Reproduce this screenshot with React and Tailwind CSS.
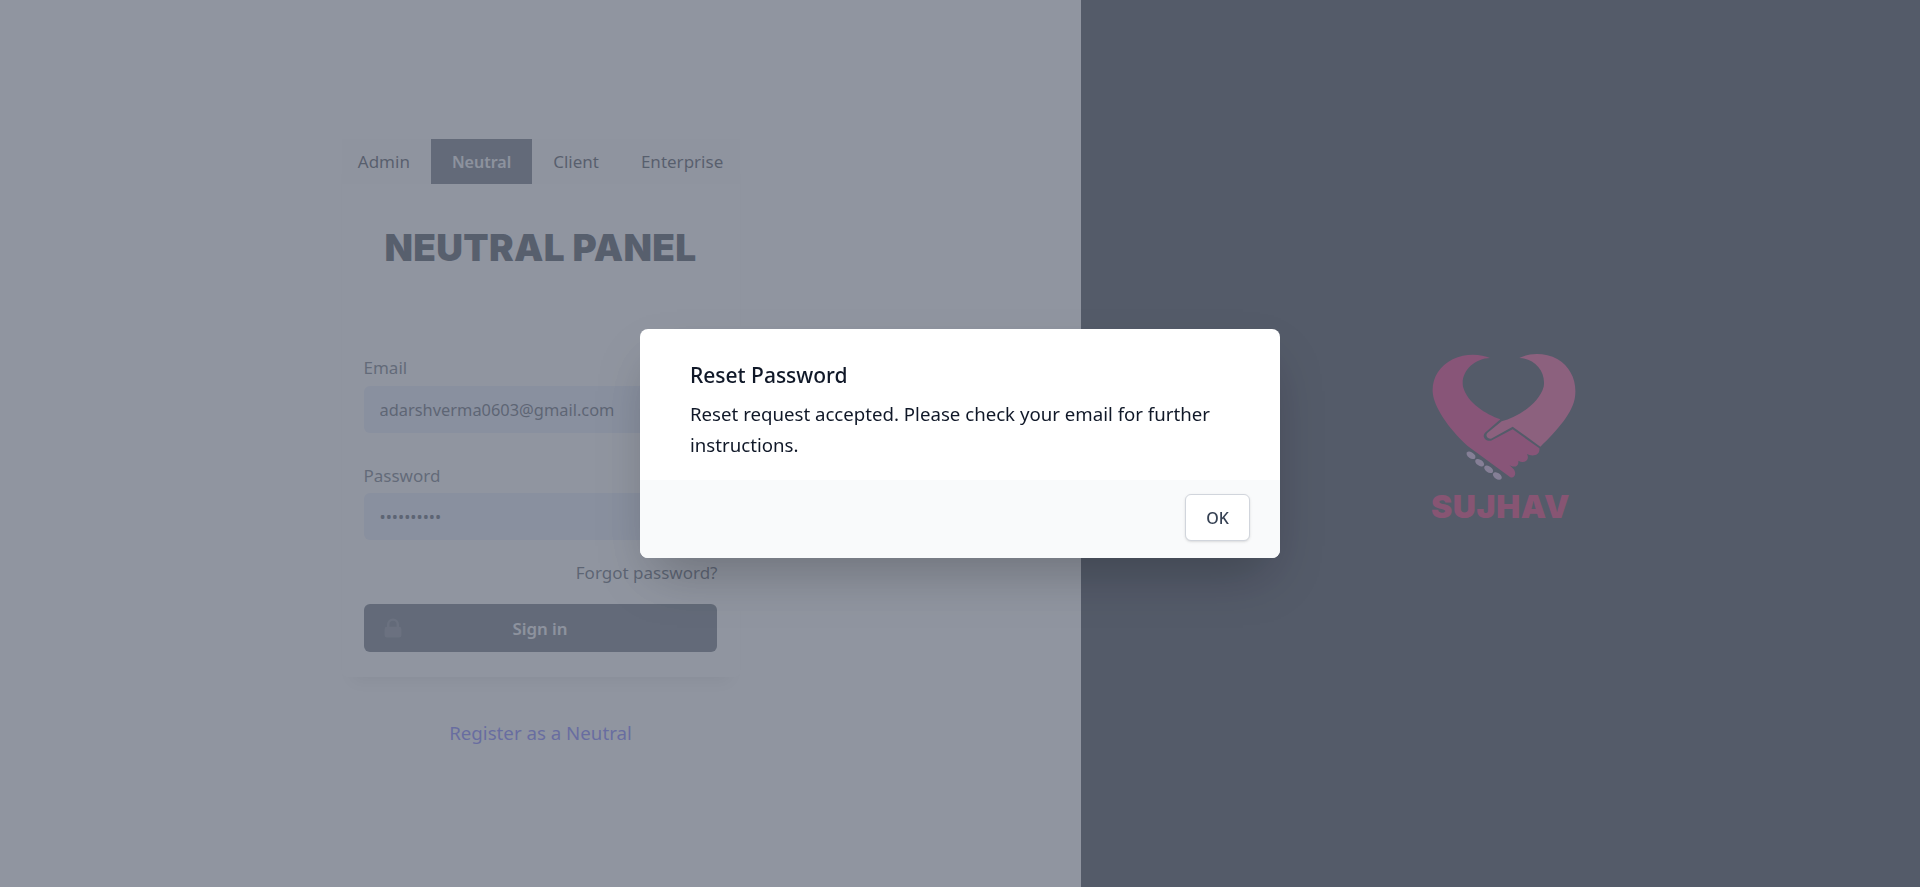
import { useState } from 'react';

const tabs = ['Admin', 'Neutral', 'Client', 'Enterprise'];

const Logo = () => (
  <div className="flex flex-col items-center mb-[25px]">
    <svg width="180" height="150" viewBox="0 0 540 450">
      <path
        d="M237 54C210 42 165 38 125 58C85 78 63 115 65 155C68 200 110 262 170 318L298 412C310 416 318 402 308 388L292 372C305 385 325 382 322 362C338 372 358 362 348 342C362 350 388 348 385 325L305 268L240 302C222 305 212 288 222 278L268 238C225 222 170 190 156 140C148 95 190 55 237 54Z"
        fill="#e00060"
      />
      <path
        d="M325 54C350 40 400 35 440 58C480 82 498 125 492 170C487 215 440 270 388 320L305 260L240 296C228 296 222 286 230 278L272 244C320 232 385 190 398 140C406 95 370 55 325 54Z"
        fill="#f03078"
      />
      <ellipse cx="180" cy="346" rx="15" ry="9" transform="rotate(35 180 346)" fill="#d4a8d8" />
      <ellipse cx="206" cy="368" rx="15" ry="9" transform="rotate(35 206 368)" fill="#d4a8d8" />
      <ellipse cx="233" cy="388" rx="15" ry="9" transform="rotate(35 233 388)" fill="#d4a8d8" />
      <ellipse cx="259" cy="408" rx="15" ry="9" transform="rotate(35 259 408)" fill="#d4a8d8" />
    </svg>
    <div className="mt-[2px] font-['Inter',sans-serif] font-black text-[32px] leading-[30px] tracking-[0.6px] text-[#dc004c]">SUJHAV</div>
  </div>
);

export default function App() {
  const [tab, setTab] = useState('Neutral');
  const [email, setEmail] = useState('adarshverma0603@gmail.com');
  const [password, setPassword] = useState('1234567890');

  return (
    <div className="flex h-screen font-['Noto_Sans',sans-serif] overflow-hidden">
      <div className="w-[1081px] bg-white flex flex-col items-center pt-[139px]">
        <div className="w-[398px] shadow-[0_14px_16px_-10px_rgba(0,0,0,0.12)] rounded-md pb-[25px]">
          <div className="flex items-center justify-center h-[45px] bg-[#fbfbfb]">
            {tabs.map((t) => (
              <button
                key={t}
                onClick={() => setTab(t)}
                className={`h-[45px] px-[21px] shrink-0 ${
                  t === tab ? 'bg-[#4b5563] text-gray-100 text-[16px] font-semibold' : 'text-[17px] text-[#1f2937]'
                }`}
              >
                {t}
              </button>
            ))}
          </div>

          <h1 className="mt-[40px] text-center font-['Inter',sans-serif] font-black text-[37px] leading-[48px] tracking-[0.3px] text-[#1f2937]">
            NEUTRAL PANEL
          </h1>

          <form className="mt-[84px] px-[22px]">
            <label className="block text-[17px] leading-[24px] text-[#4b5563] mb-[6px]">Email</label>
            <input
              value={email}
              onChange={(e) => setEmail(e.target.value)}
              className="block w-full h-[47px] px-4 rounded-md bg-[#e2e9fb] text-[16.4px] text-[#374151]"
            />
            <label className="block mt-[31px] text-[17px] leading-[24px] text-[#4b5563] mb-[5px]">Password</label>
            <input
              type="password"
              value={password}
              onChange={(e) => setPassword(e.target.value)}
              className="block w-full h-[47px] px-4 rounded-md bg-[#e2e9fb] text-[16.4px] text-[#374151]"
            />
            <div className="mt-[21px] text-right text-[17px] leading-[24px] text-[#374151]">Forgot password?</div>
            <button type="button" className="relative mt-[19px] w-[353px] h-[48px] pt-[2px] rounded-md bg-[#4b5563] text-gray-100 text-[16.8px] font-semibold">
              <svg viewBox="0 0 20 20" fill="currentColor" className="absolute left-[17px] top-[12px] w-6 h-6 text-[#6b7280]">
                <path fillRule="evenodd" clipRule="evenodd" d="M5 9V7a5 5 0 0110 0v2a2 2 0 012 2v5a2 2 0 01-2 2H5a2 2 0 01-2-2v-5a2 2 0 012-2zm8-2v2H7V7a3 3 0 016 0z" />
              </svg>
              Sign in
            </button>
          </form>
        </div>
        <a className="mt-[44px] text-[18.7px] leading-[24px] text-indigo-500">Register as a Neutral</a>
      </div>

      <div className="flex-1 bg-[#111827] flex items-center justify-center">
        <Logo />
      </div>

      <div className="fixed inset-0 bg-[#6b7280]/75 flex items-center justify-center">
        <div className="w-[640px] rounded-lg bg-white shadow-2xl overflow-hidden">
          <div className="pt-[32px] px-[50px] h-[151px]">
            <h3 className="text-[21px] leading-[28px] font-medium text-gray-900">Reset Password</h3>
            <p className="mt-[9px] text-[18.65px] leading-[31px] text-gray-900">
              Reset request accepted. Please check your email for further instructions.
            </p>
          </div>
          <div className="h-[78px] bg-gray-50 flex items-start justify-end pt-[14px] pr-[30px]">
            <button className="w-[65px] h-[47px] rounded-md border border-gray-300 bg-white text-[16px] font-medium text-gray-700 shadow-sm">
              OK
            </button>
          </div>
        </div>
      </div>
    </div>
  );
}
